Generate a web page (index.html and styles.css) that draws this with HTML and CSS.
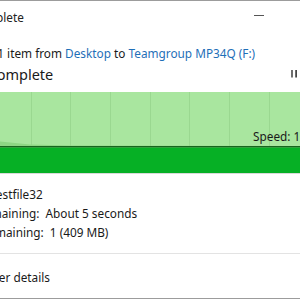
FILE: index.html
```html
<!DOCTYPE html>
<html lang="en">
<head>
    <meta charset="UTF-8">
    <title>100% complete</title>
    <link rel="stylesheet" href="styles.css">
</head>
<body>

<div class="window">
    <div class="titlebar">
        <span class="title">100% complete</span>
        <span class="caption-btn"><span class="minimize"></span></span>
        <span class="caption-btn"></span>
    </div>

    <div class="content">
        <div class="summary">Copying 1 item from <a href="#">Desktop</a> to <a href="#">Teamgroup MP34Q (F:)</a></div>

        <div class="heading-row">
            <span class="heading">100% complete</span>
            <button class="pause" title="Pause">
                <svg width="8" height="9" viewBox="0 0 8 9"><rect x="1.3" y="1" width="1.4" height="7.5" fill="#333"/><rect x="5.3" y="1" width="1.6" height="7.5" fill="#333"/></svg>
            </button>
        </div>

        <div class="chart">
            <svg width="353" height="81" viewBox="0 0 353 81">
                <rect x="0" y="0" width="353" height="81" fill="#a9e69f"/>
                <g stroke="#9ad890" stroke-width="1">
                    <line x1="42.5" y1="0" x2="42.5" y2="54"/>
                    <line x1="82.5" y1="0" x2="82.5" y2="54"/>
                    <line x1="121.5" y1="0" x2="121.5" y2="54"/>
                    <line x1="161.5" y1="0" x2="161.5" y2="54"/>
                    <line x1="201.5" y1="0" x2="201.5" y2="54"/>
                    <line x1="240.5" y1="0" x2="240.5" y2="54"/>
                    <line x1="280.5" y1="0" x2="280.5" y2="54"/>
                    <line x1="320.5" y1="0" x2="320.5" y2="54"/>
                </g>
                <polygon points="0,46 51,49.5 66,51 81,52.5 121,53.5 353,54 353,55 0,55" fill="#8ed684"/>
                <rect x="0" y="54" width="353" height="1.6" fill="#17651e"/>
                <rect x="0" y="55.6" width="353" height="25.4" fill="#06b025"/>
            </svg>
            <span class="speed">Speed: 130 MB/s</span>
        </div>

        <div class="details">
            <div>Name:&nbsp; testfile32</div>
            <div>Time remaining:&nbsp; About 5 seconds</div>
            <div>Items remaining:&nbsp; 1 (409 MB)</div>
        </div>
    </div>

    <div class="footer">
        <svg class="chevron" width="10" height="6" viewBox="0 0 10 6"><path d="M1 5.5 L5 1.5 L9 5.5" fill="none" stroke="#333" stroke-width="1"/></svg>
        <span>Fewer details</span>
    </div>
</div>

</body>
</html>
```

FILE: styles.css
```css
body {
    margin: 0;
    width: 300px;
    height: 300px;
    overflow: hidden;
    background-color: #ffffff;
    font-family: "Noto Sans", "Open Sans", sans-serif;
    font-size: 11.8px;
    color: #1a1a1a;
}

.window {
    width: 401px;
    margin-left: -73px;
    border-top: 1px solid #9c9c9c;
    border-bottom: 1px solid #9c9c9c;
    background-color: #ffffff;
}

.titlebar {
    height: 31px;
    display: flex;
    align-items: center;
    padding-left: 12px;
}

.title {
    flex: 1;
    color: #222;
}

.caption-btn {
    width: 46px;
    height: 31px;
    display: flex;
    align-items: center;
    justify-content: center;
}

.minimize {
    width: 10px;
    border-top: 1px solid #555;
    margin-top: -3px;
}

.content {
    padding: 0 24px 0 22px;
}

.summary {
    margin-top: 11px;
    line-height: 20px;
    white-space: nowrap;
}

.summary a {
    color: #1f6fb8;
    text-decoration: none;
}

.heading-row {
    display: flex;
    align-items: center;
    height: 21px;
}

.heading {
    flex: 1;
    font-size: 14.5px;
    color: #1a1a1a;
}

.pause {
    border: none;
    background: none;
    padding: 0;
    margin-right: 6px;
    display: flex;
}

.chart {
    position: relative;
    margin-top: 8px;
    height: 81px;
    border-bottom: 1px solid #d9d9d9;
}

.chart svg {
    display: block;
}

.speed {
    position: absolute;
    left: 304px;
    top: 36px;
    white-space: nowrap;
}

.details {
    padding: 11px 0 11px;
    line-height: 19px;
    border-bottom: 1px solid #e3e3e3;
}

.footer {
    height: 44px;
    display: flex;
    align-items: center;
    gap: 8px;
    padding: 2px 0 0 32px;
    box-sizing: border-box;
}
```
